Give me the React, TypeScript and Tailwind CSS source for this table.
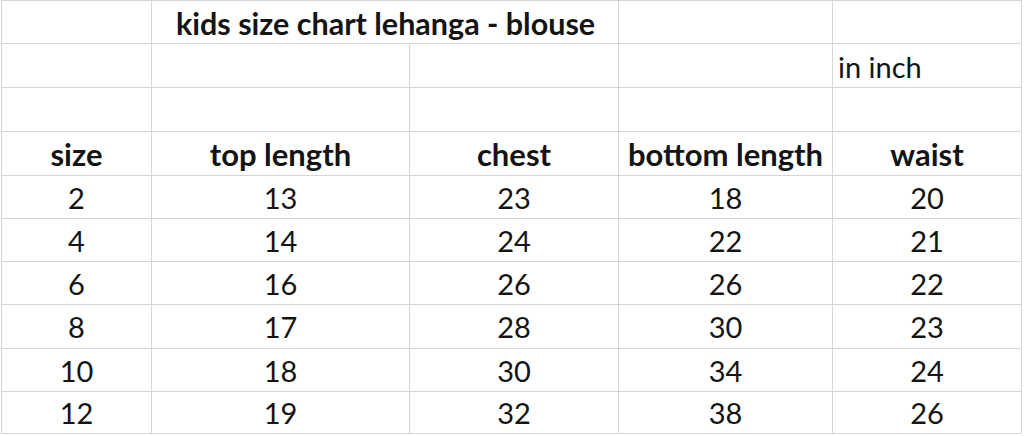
const rows: string[][] = [
  ["2", "13", "23", "18", "20"],
  ["4", "14", "24", "22", "21"],
  ["6", "16", "26", "26", "22"],
  ["8", "17", "28", "30", "23"],
  ["10", "18", "30", "34", "24"],
  ["12", "19", "32", "38", "26"],
];

// row heights taken from the sheet's gridlines
const heights = ["h-[43px]", "h-[44px]", "h-[44px]", "h-[44px]", "h-[43px]", "h-[43px]", "h-[43px]", "h-[44px]", "h-[43px]", "h-[42px]"];

function Cell({ children, className = "" }: { children?: React.ReactNode; className?: string }) {
  return (
    <div className={`flex items-center whitespace-nowrap border-r border-b border-[#d6d6d6] ${className}`}>
      {children}
    </div>
  );
}

export default function App() {
  return (
    <div className="w-[1024px] h-[436px] bg-white text-[#141414] font-['Lato','Liberation_Sans',sans-serif] leading-none">
      <div className="ml-px w-[1021px] border-l border-t border-[#d6d6d6] grid grid-cols-[150px_258px_209px_214px_189px]">
        {/* title row */}
        <Cell className={heights[0]} />
        <Cell className={`${heights[0]} col-span-2 pl-[24px] pt-[2px] text-[30.5px] font-bold`}>kids size chart lehanga - blouse</Cell>
        <Cell className={heights[0]} />
        <Cell className={heights[0]} />

        {/* unit row */}
        <Cell className={heights[1]} />
        <Cell className={heights[1]} />
        <Cell className={heights[1]} />
        <Cell className={heights[1]} />
        <Cell className={`${heights[1]} pl-[5px] pt-[2px] text-[29px]`}>in inch</Cell>

        {/* spacer row */}
        <Cell className={heights[2]} />
        <Cell className={heights[2]} />
        <Cell className={heights[2]} />
        <Cell className={heights[2]} />
        <Cell className={heights[2]} />

        {/* header */}
        {["size", "top length", "chest", "bottom length", "waist"].map((h) => (
          <Cell key={h} className={`${heights[3]} justify-center pt-[1px] text-[31px] font-bold`}>{h}</Cell>
        ))}

        {rows.map((r, i) =>
          r.map((v, j) => (
            <Cell key={`${i}-${j}`} className={`${heights[4 + i]} justify-center text-[29px]`}>{v}</Cell>
          ))
        )}
      </div>
    </div>
  );
}
